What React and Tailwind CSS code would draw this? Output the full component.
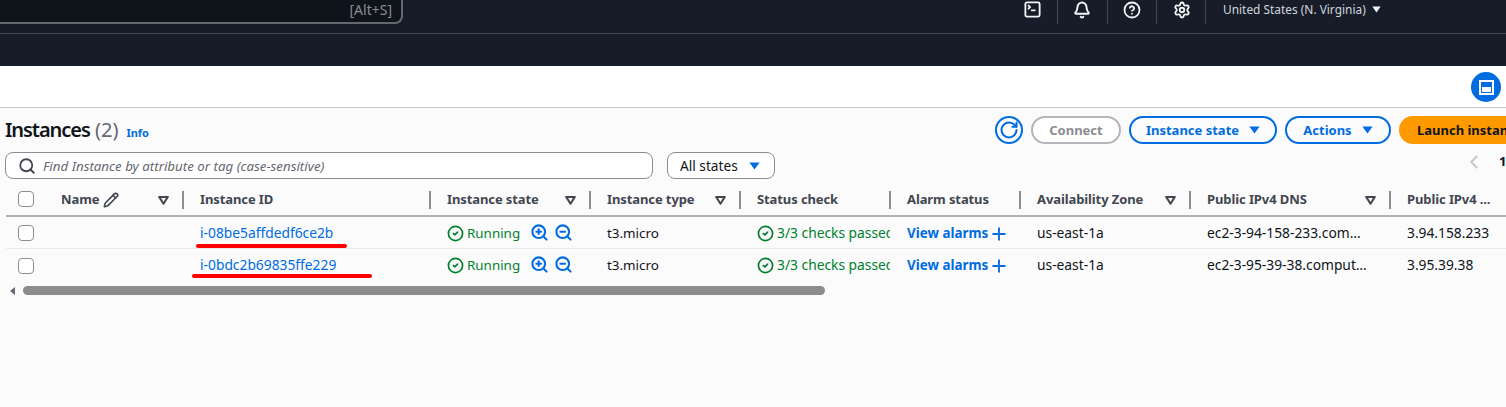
import React from "react";
import { SquareTerminal, Bell, CircleHelp, Settings, Search, ChevronLeft, RotateCw, CircleCheck, ZoomIn, ZoomOut, Plus, Pencil } from "lucide-react";

const Caret = ({ className }) => (
  <svg viewBox="0 0 14 10" className={className}><path d="M0.5 0.5h13L7 9.5z" fill="currentColor" /></svg>
);
const FilterIcon = () => (
  <svg viewBox="0 0 12 10" className="w-[11px] h-[9px] text-[#424650] shrink-0"><path d="M1.2 1h9.6L6 8.6z" fill="none" stroke="currentColor" strokeWidth="2.2" strokeLinejoin="round" /></svg>
);
const Sep = ({ light }) => <span className={light ? "w-[2px] h-[18px] bg-[#c6c6cd] shrink-0" : "w-[2px] h-[18px] mr-[1px] bg-[#8c8c94] shrink-0"} />;
const Box = () => <span className="block w-4 h-4 rounded-[4px] border border-[#8c8c94] bg-white shrink-0" />;

const HCell = ({ w, children, filter }) => (
  <div className={`${w} flex items-center shrink-0 pl-[15px] h-full`}>
    <span className="flex-1 flex items-center gap-1 text-[13px] font-bold tracking-[-0.1px] text-[#424650] whitespace-nowrap">{children}</span>
    {filter && <span className="mr-[13px]"><FilterIcon /></span>}
    <Sep />
  </div>
);
const Cell = ({ w, children }) => (
  <div className={`${w} flex items-center shrink-0 pl-[15px] pr-[2px] h-full overflow-hidden whitespace-nowrap text-[13.8px] text-[#0f141a]`}>{children}</div>
);

const columns = {
  name: "w-[139px]",
  id: "w-[247px]",
  state: "w-[160px]",
  type: "w-[150px]",
  status: "w-[150px]",
  alarm: "w-[130px]",
  az: "w-[170px]",
  dns: "w-[200px]",
  ip: "w-[130px]",
};

const Row = ({ id, dns, ip, first }) => (
  <div className={first ? "flex h-[32px] pt-[2px] border-b border-[#e9ebed] items-center" : "flex h-[33px] items-center"}>
    <div className={first ? "w-[40px] pl-[12px] -mt-[2px] shrink-0" : "w-[40px] pl-[12px] shrink-0"}><Box /></div>
    <Cell w={columns.name} />
    <Cell w={columns.id}><a className="text-[#006ce0]">{id}</a></Cell>
    <Cell w={columns.state}>
      <CircleCheck size={17} strokeWidth={2.4} className="text-[#00802f] shrink-0" />
      <span className="ml-[3px] text-[13.4px] text-[#00802f]">Running</span>
      <ZoomIn size={19} strokeWidth={2.6} className="ml-[10px] -mt-[3px] text-[#006ce0] shrink-0" />
      <ZoomOut size={19} strokeWidth={2.6} className="ml-[5px] -mt-[3px] text-[#006ce0] shrink-0" />
    </Cell>
    <Cell w={columns.type}><span className="text-[13.4px]">t3.micro</span></Cell>
    <Cell w={columns.status}>
      <div className="flex items-center w-[133px] shrink-0 overflow-hidden">
        <CircleCheck size={17} strokeWidth={2.4} className="text-[#00802f] shrink-0" />
        <span className="ml-[3px] text-[#00802f]">3/3 checks passed</span>
      </div>
    </Cell>
    <Cell w={columns.alarm}>
      <span className="text-[#006ce0] font-bold text-[13.4px]">View alarms</span>
      <Plus size={20} strokeWidth={2.2} className="ml-[1px] text-[#006ce0] shrink-0" />
    </Cell>
    <Cell w={columns.az}>us-east-1a</Cell>
    <Cell w={columns.dns}><span>{dns}</span></Cell>
    <Cell w={columns.ip}>{ip}</Cell>
  </div>
);

export default function App() {
  return (
    <div className="relative w-[1506px] h-[407px] overflow-hidden bg-[#fbfbfb] font-['Noto_Sans',sans-serif]">
      {/* top nav */}
      <header className="h-[34px] bg-[#161d29] border-b border-[#424650] flex items-start">
        <div className="w-[403px] h-[24px] bg-[#0f141a] border-2 border-t-0 border-l-0 border-[#656871] rounded-br-[8px] flex items-center justify-end pr-[9px] pb-[3px] shrink-0">
          <span className="text-[14px] text-[#8c8c94]">[Alt+S]</span>
        </div>
        <div className="ml-auto flex items-start h-[24px] text-[#f3f3f7]">
          <div className="w-[50px] h-[19px] flex items-center justify-center"><SquareTerminal size={19} strokeWidth={2.3} /></div>
          <span className="w-px h-[24px] bg-[#424650]" />
          <div className="w-[49px] h-[19px] pr-[1px] flex items-center justify-center"><Bell size={18} strokeWidth={2.6} /></div>
          <span className="w-px h-[24px] bg-[#424650]" />
          <div className="w-[48px] h-[19px] flex items-center justify-center"><CircleHelp size={18} strokeWidth={2.4} /></div>
          <span className="w-px h-[24px] bg-[#424650]" />
          <div className="w-[48px] h-[19px] pl-[2px] flex items-center justify-center"><Settings size={18} strokeWidth={2.4} /></div>
          <span className="w-px h-[24px] bg-[#424650]" />
          <div className="w-[300px] h-[19px] pl-[17px] flex items-center">
            <span className="text-[11.9px] text-[#d1d5db]">United States (N. Virginia)</span>
            <Caret className="ml-[6px] w-[9px] h-[7px] text-[#f3f3f7]" />
          </div>
        </div>
      </header>
      <div className="h-[32px] bg-[#161d29]" />
      {/* white strip */}
      <div className="h-[42px] bg-white border-b border-[#c6c6cd] flex justify-end items-start pt-[6px] pr-[5px]">
        <div className="w-[30px] h-[30px] rounded-full bg-[#006ce0] flex items-center justify-center">
          <span className="w-[15px] h-[15px] border-2 border-white p-[1px] flex flex-col justify-end">
            <span className="block w-full h-[5px] bg-white" />
          </span>
        </div>
      </div>
      {/* title row */}
      <div className="h-[28px] mt-[8px] flex items-center w-[1600px]">
        <h1 className="ml-[5px] text-[20px] font-semibold leading-none text-[#0f141a] whitespace-nowrap"><span className="tracking-[-1.05px]">Instances</span> <span className="font-normal text-[#656871]">(2)</span></h1>
        <span className="ml-[8px] mt-[6px] text-[11px] font-bold text-[#006ce0]">Info</span>
        <div className="ml-[846px] w-[28px] h-[28px] rounded-full border-2 border-[#006ce0] flex items-center justify-center text-[#006ce0] shrink-0">
          <RotateCw size={20} strokeWidth={2.4} />
        </div>
        <div className="ml-[8px] w-[90px] h-[28px] pt-[2px] rounded-full border-2 border-[#b4b4bb] bg-white flex items-center justify-center text-[13px] font-bold text-[#8c8c94] shrink-0">Connect</div>
        <div className="ml-[8px] w-[148px] h-[28px] pt-[2px] rounded-full border-2 border-[#006ce0] flex items-center justify-center gap-[10px] text-[13px] font-bold text-[#006ce0] shrink-0">Instance state<Caret className="w-[11px] h-[8px] -mt-[2px]" /></div>
        <div className="ml-[8px] w-[106px] h-[28px] pt-[2px] rounded-full border-2 border-[#006ce0] flex items-center justify-center gap-[10px] text-[13px] font-bold text-[#006ce0] shrink-0">Actions<Caret className="w-[11px] h-[8px] -mt-[2px]" /></div>
        <div className="ml-[8px] w-[140px] h-[28px] pt-[2px] rounded-full bg-[#ff9900] flex items-center pl-[18px] text-[13px] font-bold text-[#0f141a] whitespace-nowrap shrink-0">Launch instances</div>
      </div>
      {/* filter row */}
      <div className="mt-[8px] h-[27px] flex items-center w-[1600px]">
        <div className="ml-[5px] w-[648px] h-[27px] rounded-[8px] border border-[#8c8c94] bg-white flex items-center pl-[12px] shrink-0">
          <Search size={18} strokeWidth={2.4} className="text-[#424650]" />
          <span className="ml-[7px] pt-[3px] italic text-[13.3px] text-[#656871]">Find Instance by attribute or tag (case-sensitive)</span>
        </div>
        <div className="ml-[14px] w-[108px] h-[27px] rounded-[8px] border border-[#8c8c94] bg-white flex items-center pl-[12px] shrink-0">
          <span className="pt-[2px] text-[13.7px] text-[#0f141a]">All states</span>
          <Caret className="ml-[11px] w-[11px] h-[8px] text-[#006ce0]" />
        </div>
        <ChevronLeft size={22} strokeWidth={2.2} className="ml-[688px] -mt-[8px] text-[#c6c6cd] shrink-0" />
        <span className="ml-[14px] -mt-[8px] text-[13px] font-bold text-[#0f141a]">1</span>
      </div>
      {/* table */}
      <div className="mt-[4px] ml-[6px] w-[1600px]">
        <div className="flex h-[34px] pt-[2px] border-b-2 border-[#b4b4bb] items-center">
          <div className="w-[40px] pl-[12px] flex items-center shrink-0 h-full">
            <span className="-mt-[2px]"><Box /></span>
            <span className="ml-[10px]"><Sep light /></span>
          </div>
          <HCell w={columns.name} filter><span className="-mt-[1px]">Name</span> <Pencil size={16} strokeWidth={2.4} className="-mt-[1px]" /></HCell>
          <HCell w={columns.id}>Instance ID</HCell>
          <HCell w={columns.state} filter>Instance state</HCell>
          <HCell w={columns.type} filter>Instance type</HCell>
          <HCell w={columns.status}>Status check</HCell>
          <HCell w={columns.alarm}>Alarm status</HCell>
          <HCell w={columns.az} filter>Availability Zone</HCell>
          <HCell w={columns.dns} filter>Public IPv4 DNS</HCell>
          <HCell w={columns.ip}>Public IPv4 ...</HCell>
        </div>
        <Row id="i-08be5affdedf6ce2b" dns="ec2-3-94-158-233.com…" ip="3.94.158.233" first />
        <Row id="i-0bdc2b69835ffe229" dns="ec2-3-95-39-38.comput…" ip="3.95.39.38" />
      </div>
      {/* scrollbar */}
      <div className="mt-[4px] flex items-center h-[9px]">
        <span className="ml-[10px] w-0 h-0 border-y-[4px] border-y-transparent border-r-[5px] border-r-[#656871]" />
        <span className="ml-[8px] w-[802px] h-[9px] rounded-full bg-[#8c8c8c]" />
      </div>
      {/* red annotations */}
      <span className="absolute left-[196px] top-[244px] w-[151px] h-[4px] rounded-full bg-[#ff0000]" />
      <span className="absolute left-[192px] top-[274px] w-[180px] h-[4px] rounded-full bg-[#ff0000]" />
    </div>
  );
}
